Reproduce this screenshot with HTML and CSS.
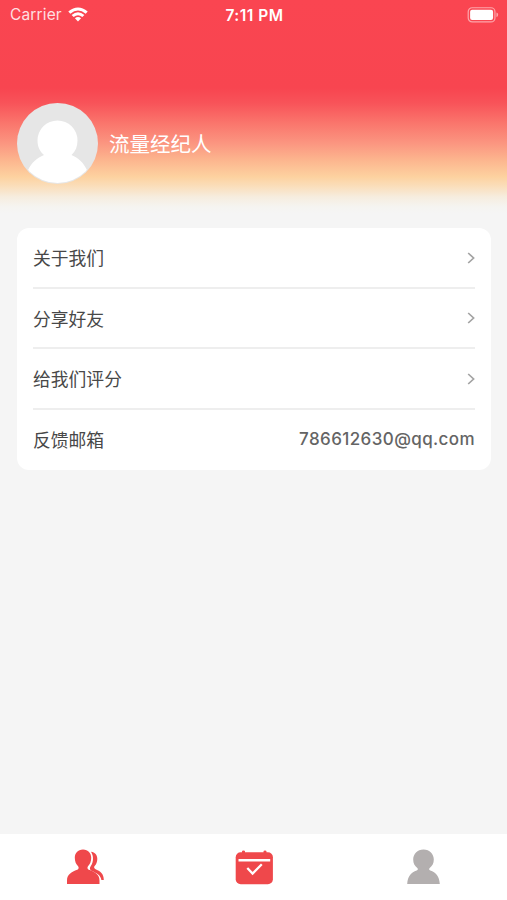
FILE: index.html
```html
<!DOCTYPE html>
<html lang="zh-CN">
<head>
	<meta charset="UTF-8">
	<title>我的</title>
	<link rel="stylesheet" href="styles.css">
</head>
<body>
	<div id="container">
		<div id="header">
			<div class="status">
				<div class="carrier">
					<span>Carrier</span>
					<svg class="wifi" width="20" height="15" viewBox="0 0 20 15">
						<path d="M0.3 4.6Q10 -3.6 19.7 4.6L17.7 6.7Q10 0.3 2.3 6.7Z"/>
						<path d="M3.6 8Q10 2.6 16.4 8L14.3 10.1Q10 6.5 5.7 10.1Z"/>
						<path d="M6.9 11.3Q10 8.7 13.1 11.3L10 14.5Z"/>
					</svg>
				</div>
				<span class="time">7:11 PM</span>
				<svg class="battery" width="32" height="16" viewBox="0 0 33 17">
					<rect class="shell" x="0.8" y="0.8" width="28.4" height="15" rx="4.2"/>
					<rect class="level" x="2.8" y="2.8" width="24.4" height="11" rx="2.2"/>
					<path class="cap" d="M30.8 5.8Q32.6 6.4 32.6 8.3T30.8 10.8Z"/>
				</svg>
			</div>
			<div class="user">
				<svg class="avatar" width="81" height="81" viewBox="0 0 81 81">
					<defs>
						<clipPath id="round"><circle cx="40.5" cy="40.5" r="39.5"/></clipPath>
					</defs>
					<circle cx="40.5" cy="40.5" r="40.5" fill="#e6e6e6"/>
					<path clip-path="url(#round)" fill="#fff" d="M20.5 37.5a20 20 0 1 1 40 0c0 6-2 11-6 14.500c7 3 11.500 7 15.500 15V81H11V67c4-8 9-12 16-15c-4.500-4-6.500-8.500-6.500-14.500Z"/>
				</svg>
				<span class="name">流量经纪人</span>
			</div>
		</div>
		<ul id="menu">
			<li>
				<span>关于我们</span>
				<svg class="arrow" width="8" height="12" viewBox="0 0 8 12"><path d="M1.200 1L6.600 6L1.200 11"/></svg>
			</li>
			<li>
				<span>分享好友</span>
				<svg class="arrow" width="8" height="12" viewBox="0 0 8 12"><path d="M1.200 1L6.600 6L1.200 11"/></svg>
			</li>
			<li>
				<span>给我们评分</span>
				<svg class="arrow" width="8" height="12" viewBox="0 0 8 12"><path d="M1.200 1L6.600 6L1.200 11"/></svg>
			</li>
			<li>
				<span>反馈邮箱</span>
				<span class="mail">786612630@qq.com</span>
			</li>
		</ul>
		<ul id="tabs">
			<li class="red">
				<svg width="38" height="36" viewBox="0 0 38 36">
					<path d="M17 0.500c5.200 0 8.200 3.800 8.200 8.300c0 3.700-1.200 6.500-3.200 8.500c-1 1.500-0.600 2.900 0.900 3.500c6 2.200 10.600 4.700 10.600 10.700V35H1V31.500c0-6 4.500-8.500 10.200-10.700c1.500-0.600 1.900-2 0.900-3.500C10 15.300 8.800 12.500 8.800 8.800c0-4.500 3-8.300 8.200-8.300Z"/>
					<path d="M25 2.700c4 0.200 6.300 3.500 6.300 7.200c0 3-1.100 5.300-2.700 7.200c-0.800 1.200-0.500 2.300 0.600 2.900c5.200 2.400 8.600 4.600 8.600 11h-2.400c-0.700-4.800-4.600-6.800-9.600-9c-2.300-1.100-2.400-2.900-1-5c2.900-4.300 3-9.800 0.200-14.300Z"/>
				</svg>
			</li>
			<li class="red">
				<svg width="38" height="36" viewBox="0 0 38 36">
					<path d="M7 4V2.500q0-1 1.500-1T10 2.500V4Z M28.500 4V2.500q0-1 1.500-1T31.500 2.500V4Z"/>
					<rect x="0.700" y="3.300" width="37.200" height="32" rx="5"/>
					<path class="line" d="M3.500 11.300H35.200"/>
					<path class="line check" d="M12.300 19L17.600 24.500L26.800 15.300"/>
				</svg>
			</li>
			<li class="gray">
				<svg width="38" height="36" viewBox="0 0 38 36">
					<path d="M19.500 0.500c6.200 0 10.300 4.700 10.300 10c0 3.800-1.500 6.500-4.100 8.500c-1 0.900-0.700 1.900 0.600 2.500c5.500 2.200 9 5.200 9.500 13.500H3.200c0.500-8.300 4-11.300 9.500-13.500c1.300-0.600 1.600-1.600 0.600-2.500C10.700 17 9.200 14.300 9.200 10.500c0-5.300 4.100-10 10.300-10Z"/>
				</svg>
			</li>
		</ul>
	</div>
</body>
</html>
```
FILE: styles.css
```css
*{
	margin: 0;
	padding: 0;
	box-sizing: border-box;
}
ul{
	list-style: none;
}
svg{
	display: block;
	flex: none;
}
body{
	background: #f5f5f5;
	font-family: Inter, "Noto Sans CJK SC", sans-serif;
}
#container{
	height: 900px;
	display: flex;
	flex-direction: column;
}
#header{
	height: 228px;
	background: linear-gradient(#fa4551 0, #f84550 88px, #f85359 103px, #fa756c 123px, #fb9580 143px, #fcb58e 160px, #fdd2a0 177px, #fadfbd 187px, #f6eddf 197px, #f5f4f1 207px, #f5f5f5 214px);
}
.status{
	height: 29px;
	padding: 0 8px 0 10px;
	display: grid;
	grid-template-columns: 1fr auto 1fr;
	align-items: center;
	color: #fff;
}
.carrier{
	display: flex;
	align-items: center;
	gap: 6px;
	color: #ffdfe0;
	font-size: 15.5px;
	letter-spacing: 0.15px;
}
.wifi{
	fill: #fff;
}
.time{
	padding-top: 1px;
	font-size: 15.5px;
	font-weight: 600;
	letter-spacing: 0.5px;
}
.battery{
	justify-self: end;
}
.shell{
	fill: none;
	stroke: #fda5aa;
	stroke-width: 1.3;
}
.level{
	fill: #fff;
}
.cap{
	fill: #fda5aa;
}
.user{
	padding: 74px 17px 0;
	display: flex;
	align-items: center;
}
.name{
	margin-left: 11px;
	padding-bottom: 2px;
	color: #fff;
	font-size: 20.5px;
}
#menu{
	margin: 0 16px 0 17px;
	padding: 0 16px;
	background: #fff;
	border-radius: 12px;
}
#menu li{
	height: 60.5px;
	display: flex;
	align-items: center;
	justify-content: space-between;
	border-bottom: 2px solid #eee;
	color: #484848;
	font-size: 17.8px;
}
#menu li:last-child{
	height: 60px;
	padding-bottom: 1px;
	border-bottom: 0;
}
.arrow{
	margin-top: 1px;
	fill: none;
	stroke: #a3a3a3;
	stroke-width: 1.7;
}
#menu .mail{
	color: #646464;
	font-size: 17px;
	font-weight: 500;
	letter-spacing: 0.4px;
}
#tabs{
	height: 66px;
	margin-top: auto;
	padding: 15px 0 0 1px;
	display: flex;
	background: #fff;
}
#tabs li{
	flex: 1;
	display: flex;
	justify-content: center;
}
.red{
	fill: #ef484b;
}
.gray{
	fill: #b3afaf;
}
.line{
	fill: none;
	stroke: #fff;
	stroke-width: 2.5;
}
.check{
	stroke-width: 2.3;
}
```
